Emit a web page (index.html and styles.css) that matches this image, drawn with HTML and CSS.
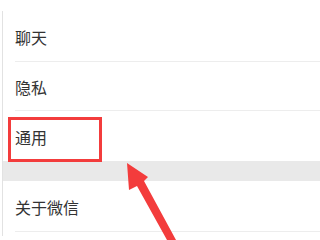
FILE: index.html
```html
<!DOCTYPE html>
<html lang="zh-CN">
<head>
    <meta charset="UTF-8">
    <meta name="viewport" content="width=device-width, initial-scale=1.0">
    <title>设置</title>
    <link rel="stylesheet" href="styles.css">
</head>
<body>
    <div class="screen">
        <div class="settings">
            <div class="group">
                <div class="item first">聊天</div>
                <div class="item">隐私</div>
                <div class="item last">通用</div>
            </div>

            <div class="gap"></div>

            <div class="group">
                <div class="item about">关于微信</div>
            </div>
        </div>

        <!-- annotation -->
        <div class="highlight"></div>
        <svg class="arrow" width="320" height="240" viewBox="0 0 320 240">
            <polygon points="127,163 148,177 144,181 176,240 167,240 137,186 129,190" fill="#f33c3c"/>
        </svg>
    </div>
</body>
</html>
```

FILE: styles.css
```css
:root {
    --text-dark: #333333;
    --divider: #ededed;
    --band: #e9e9e9;
    --mark: #f33c3c;
}

* {
    margin: 0;
    padding: 0;
    box-sizing: border-box;
}

body {
    font-family: "Noto Sans CJK SC", "Noto Sans", sans-serif;
    background: #ffffff;
    color: var(--text-dark);
    width: 320px;
    height: 240px;
    overflow: hidden;
}

.screen {
    position: relative;
    width: 320px;
    height: 240px;
    padding-top: 11px;
}

.settings {
    margin-left: 2px;
    height: 225px;
    border-left: 1px solid #e2e2e2;
}

.item {
    display: flex;
    align-items: center;
    margin-left: 12px;
    padding-top: 2px;
    font-size: 16px;
    height: 49px;
    border-bottom: 1px solid var(--divider);
}

.item.first {
    height: 51px;
}

.item.last {
    height: 50px;
    border-bottom: none;
}

.item.about {
    height: 51px;
}

.gap {
    height: 20px;
    background: var(--band);
}

.highlight {
    position: absolute;
    left: 8px;
    top: 117px;
    width: 94px;
    height: 45px;
    border: 3px solid var(--mark);
}

.arrow {
    position: absolute;
    left: 0;
    top: 0;
}
```
